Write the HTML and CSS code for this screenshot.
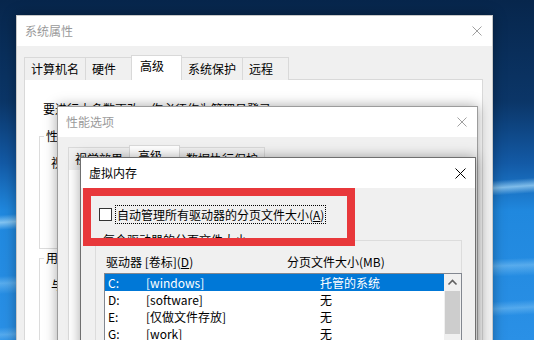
FILE: index.html
```html
<!DOCTYPE html>
<html lang="zh-CN">
<head>
    <meta charset="UTF-8">
    <meta name="viewport" content="width=device-width, initial-scale=1.0">
    <title>虚拟内存</title>
    <link rel="stylesheet" href="styles.css">
</head>
<body class="desktop">
    <!-- 系统属性 -->
    <div class="window win-sys">
        <div class="titlebar">
            <span class="title">系统属性</span>
            <span class="close"><svg width="10" height="10" viewBox="0 0 10 10"><path d="M0.5 0.5L9.5 9.5M9.5 0.5L0.5 9.5"/></svg></span>
        </div>
        <div class="dlg-body sys-body">
            <div class="tabs">
                <span class="tab">计算机名</span>
                <span class="tab">硬件</span>
                <span class="tab active">高级</span>
                <span class="tab">系统保护</span>
                <span class="tab">远程</span>
            </div>
            <div class="tab-panel sys-panel">
                <p class="note">要进行大多数更改，你必须作为管理员登录。</p>
                <fieldset class="group sys-group">
                    <legend>性能</legend>
                    <div class="group-text">视觉效果，处理器计划，内存使用，以及虚拟内存</div>
                </fieldset>
                <fieldset class="group sys-group second">
                    <legend>用户配置文件</legend>
                    <div class="group-text">与登录帐户相关的桌面设置</div>
                </fieldset>
            </div>
        </div>
    </div>

    <!-- 性能选项 -->
    <div class="window win-perf">
        <div class="titlebar">
            <span class="title">性能选项</span>
            <span class="close"><svg width="10" height="10" viewBox="0 0 10 10"><path d="M0.5 0.5L9.5 9.5M9.5 0.5L0.5 9.5"/></svg></span>
        </div>
        <div class="dlg-body perf-body">
            <div class="tabs">
                <span class="tab">视觉效果</span>
                <span class="tab active">高级</span>
                <span class="tab">数据执行保护</span>
            </div>
            <div class="tab-panel perf-panel"></div>
        </div>
    </div>

    <!-- 虚拟内存 -->
    <div class="window win-vm is-active">
        <div class="titlebar">
            <span class="title">虚拟内存</span>
            <span class="close"><svg width="11" height="11" viewBox="0 0 11 11"><path d="M0.5 0.5L10.5 10.5M10.5 0.5L0.5 10.5"/></svg></span>
        </div>
        <div class="vm-body">
            <div class="check-row">
                <span class="checkbox"></span>
                <span class="focus-label">自动管理所有驱动器的分页文件大小(<u>A</u>)</span>
            </div>
            <fieldset class="group vm-group">
                <legend>每个驱动器的分页文件大小</legend>
                <div class="col-head">
                    <span class="col-drive">驱动器 [卷标](<u>D</u>)</span>
                    <span>分页文件大小(MB)</span>
                </div>
                <div class="listbox">
                    <div class="rows">
                        <div class="row selected"><span>C:</span><span>[windows]</span><span>托管的系统</span></div>
                        <div class="row"><span>D:</span><span>[software]</span><span>无</span></div>
                        <div class="row"><span>E:</span><span>[仅做文件存放]</span><span>无</span></div>
                        <div class="row"><span>G:</span><span>[work]</span><span>无</span></div>
                    </div>
                    <div class="scrollbar">
                        <div class="sb-btn"><svg width="17" height="17" viewBox="0 0 17 17"><path d="M4.5 10.5L8.5 6.5L12.5 10.5"/></svg></div>
                        <div class="sb-thumb"></div>
                    </div>
                </div>
            </fieldset>
        </div>
    </div>

    <!-- 标注框 -->
    <div class="mark"></div>
</body>
</html>
```

FILE: styles.css
```css
* {
    box-sizing: border-box;
}
body {
    margin: 0;
    width: 534px;
    height: 340px;
    overflow: hidden;
    position: relative;
    font-family: "Noto Sans CJK SC", "Noto Sans", sans-serif;
    font-size: 12px;
    line-height: 16px;
    color: #000;
}
.desktop {
    background:
        linear-gradient(176deg, transparent 57%, rgba(170,220,250,0.7) 59%, transparent 61%),
        linear-gradient(178deg, transparent 77%, rgba(150,210,250,0.45) 79%, transparent 82%),
        linear-gradient(177deg, transparent 89%, rgba(150,210,250,0.4) 91%, transparent 93%),
        linear-gradient(180deg, #07264c 0%, #0b3668 30%, #135aa6 48%, #2088de 62%, #2a90e6 100%);
}

/* windows */
.window {
    position: absolute;
    background: #f0f0f0;
    border: 1px solid #b4b4b4;
    box-shadow: 0 0 12px rgba(0,0,0,0.35);
}
.win-sys {
    z-index: 1;
    left: 16px;
    top: 15px;
    width: 477px;
    height: 340px;
    border-color: #c8c8c8;
}
.win-perf {
    z-index: 2;
    left: 57px;
    top: 106px;
    width: 421px;
    height: 260px;
    border-color: #9c9c9c;
}
.win-vm {
    z-index: 3;
    left: 80px;
    top: 157px;
    width: 396px;
    height: 220px;
    border-color: #6f6f6f;
}
.titlebar {
    height: 30px;
    background: #fff;
    display: flex;
    align-items: center;
    justify-content: space-between;
    padding-left: 8px;
}
.title {
    color: #9a9a9a;
}
.close {
    width: 30px;
    height: 30px;
    display: flex;
    align-items: center;
    justify-content: center;
}
.close svg path {
    stroke: #a0a0a0;
    stroke-width: 1;
    fill: none;
}
.is-active .title {
    color: #000;
}
.is-active .close svg path {
    stroke: #000;
}

/* tabs */
.dlg-body {
    height: 100%;
}
.sys-body {
    padding: 9px 9px 0 7px;
}
.perf-body {
    padding: 8px 10px 0 10px;
}
.tabs {
    display: flex;
    align-items: flex-end;
    height: 25px;
    margin-bottom: -1px;
    position: relative;
    z-index: 1;
}
.tab {
    height: 23px;
    line-height: 22px;
    min-width: 47px;
    padding: 0 6px;
    border: 1px solid #d9d9d9;
    border-bottom: none;
    margin-right: -1px;
    background: #f0f0f0;
}
.tab.active {
    height: 25px;
    line-height: 20px;
    min-width: 51px;
    padding: 0 8px;
    background: #fff;
}
.tab-panel {
    background: #fff;
    border: 1px solid #d9d9d9;
    height: 300px;
}
.sys-panel {
    padding: 21px 14px 0 14px;
}
.note {
    margin: 0 0 11px 4px;
}
.group {
    margin: 0;
    border: 1px solid #dcdcdc;
    padding: 0 4px 0 4px;
}
.group legend {
    padding: 0 2px;
}
.sys-group {
    height: 121px;
}
.sys-group.second {
    margin-top: 1px;
}
.group-text {
    margin: 11px 0 0 7px;
}

/* virtual memory */
.vm-body {
    padding: 17px 13px 0 14px;
}
.check-row {
    display: flex;
    align-items: center;
    height: 19px;
    margin-left: 4px;
}
.checkbox {
    width: 13px;
    height: 13px;
    border: 1px solid #333;
    background: #fff;
    margin-right: 3px;
}
.focus-label {
    outline: 1px dotted #000;
    outline-offset: -1px;
    padding: 1px 2px;
    line-height: 17px;
}
.vm-group {
    margin-top: 8px;
    padding: 0 0 0 5px;
    height: 140px;
}
.col-head {
    display: flex;
    margin: 6px 0 3px 5px;
}
.col-drive {
    width: 181px;
}
.listbox {
    display: flex;
    margin: 0 -1px 0 3px;
    border: 1px solid #828790;
    background: #fff;
    height: 90px;
}
.rows {
    flex: 1;
}
.row {
    display: grid;
    grid-template-columns: 38px 174px 1fr;
    height: 17px;
    line-height: 17px;
    padding-left: 3px;
}
.row.selected {
    background: #0078d7;
    color: #fff;
}
.scrollbar {
    width: 17px;
    background: #f0f0f0;
}
.sb-btn {
    height: 17px;
}
.sb-btn svg path {
    stroke: #606060;
    stroke-width: 1.6;
    fill: none;
}
.sb-thumb {
    margin: 0 1px;
    height: 43px;
    background: #cdcdcd;
}

/* red annotation box */
.mark {
    position: absolute;
    z-index: 4;
    left: 83px;
    top: 188px;
    width: 272px;
    height: 58px;
    border: 8px solid #e8383b;
}
```
